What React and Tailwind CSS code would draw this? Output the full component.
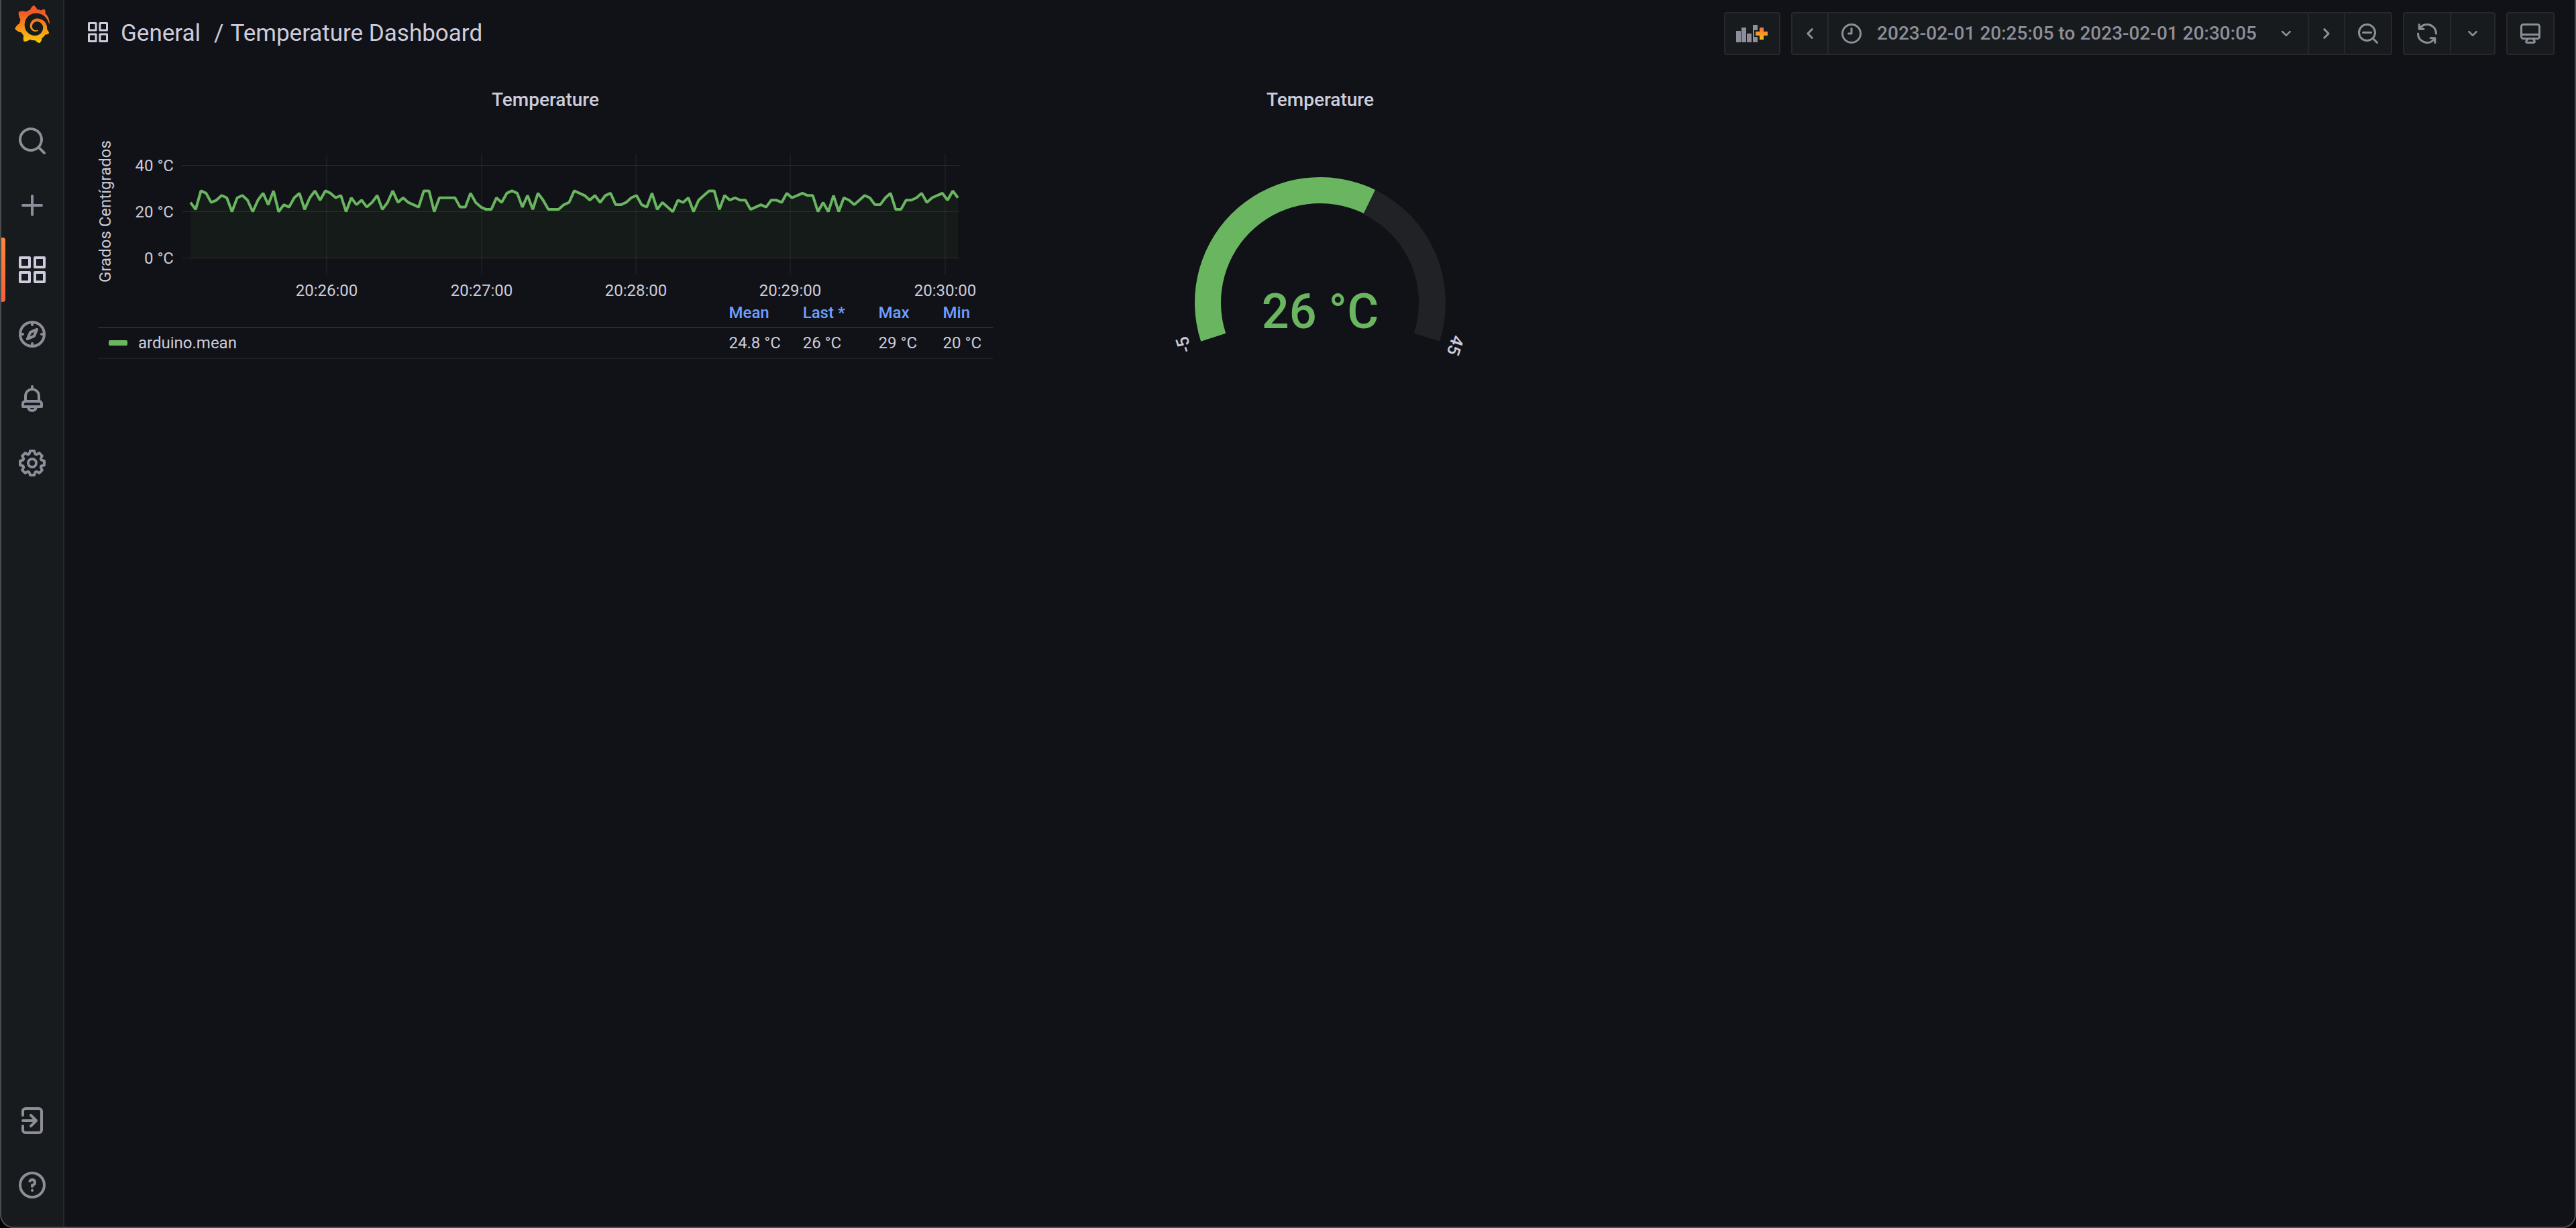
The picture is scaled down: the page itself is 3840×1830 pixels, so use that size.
import { SiGrafana } from "react-icons/si";

const PATHS = {
  search:
    "M21.71,20.29,18,16.61A9,9,0,1,0,16.61,18l3.68,3.68a1,1,0,0,0,1.42,0A1,1,0,0,0,21.71,20.29ZM11,18a7,7,0,1,1,7-7A7,7,0,0,1,11,18Z",
  plus: "M19,11H13V5a1,1,0,0,0-2,0v6H5a1,1,0,0,0,0,2h6v6a1,1,0,0,0,2,0V13h6a1,1,0,0,0,0-2Z",
  apps:
    "M10,13H3a1,1,0,0,0-1,1v7a1,1,0,0,0,1,1h7a1,1,0,0,0,1-1V14A1,1,0,0,0,10,13ZM9,20H4V15H9ZM21,2H14a1,1,0,0,0-1,1v7a1,1,0,0,0,1,1h7a1,1,0,0,0,1-1V3A1,1,0,0,0,21,2ZM20,9H15V4h5Zm1,4H14a1,1,0,0,0-1,1v7a1,1,0,0,0,1,1h7a1,1,0,0,0,1-1V14A1,1,0,0,0,21,13Zm-1,7H15V15h5ZM10,2H3A1,1,0,0,0,2,3v7a1,1,0,0,0,1,1h7a1,1,0,0,0,1-1V3A1,1,0,0,0,10,2ZM9,9H4V4H9Z",
  compass:
    "M12,2A10,10,0,1,0,22,12,10,10,0,0,0,12,2Zm1,17.93V19a1,1,0,0,0-2,0v.93A8,8,0,0,1,4.07,13H5a1,1,0,0,0,0-2H4.07A8,8,0,0,1,11,4.07V5a1,1,0,0,0,2,0V4.07A8,8,0,0,1,19.93,11H19a1,1,0,0,0,0,2h.93A8,8,0,0,1,13,19.93ZM15.14,7.55l-5,2.12a1,1,0,0,0-.52.52l-2.12,5a1,1,0,0,0,.21,1.1,1,1,0,0,0,.7.3.93.93,0,0,0,.4-.09l5-2.12a1,1,0,0,0,.52-.52l2.12-5a1,1,0,0,0-1.31-1.31Zm-2.49,5.1-2.28,1,1-2.28,2.28-1Z",
  bell:
    "M18,13.18V10a6,6,0,0,0-5-5.91V3a1,1,0,0,0-2,0V4.09A6,6,0,0,0,6,10v3.18A3,3,0,0,0,4,16v2a1,1,0,0,0,1,1H8.14a4,4,0,0,0,7.72,0H19a1,1,0,0,0,1-1V16A3,3,0,0,0,18,13.18ZM8,10a4,4,0,0,1,8,0v3H8Zm4,10a2,2,0,0,1-1.72-1h3.44A2,2,0,0,1,12,20Zm6-3H6V16a1,1,0,0,1,1-1H17a1,1,0,0,1,1,1Z",
  cog:
    "M21.32,9.55l-1.89-.63.89-1.78A1,1,0,0,0,20.13,6L18,3.87a1,1,0,0,0-1.15-.19l-1.78.89-.63-1.89A1,1,0,0,0,13.5,2h-3a1,1,0,0,0-.95.68L8.92,4.57,7.14,3.68A1,1,0,0,0,6,3.87L3.87,6a1,1,0,0,0-.19,1.15l.89,1.78-1.89.63A1,1,0,0,0,2,10.5v3a1,1,0,0,0,.68.95l1.89.63-.89,1.78A1,1,0,0,0,3.87,18L6,20.13a1,1,0,0,0,1.15.19l1.78-.89.63,1.89a1,1,0,0,0,.95.68h3a1,1,0,0,0,.95-.68l.63-1.89,1.78.89A1,1,0,0,0,18,20.13L20.13,18a1,1,0,0,0,.19-1.15l-.89-1.78,1.89-.63A1,1,0,0,0,22,13.5v-3A1,1,0,0,0,21.32,9.55ZM20,12.78l-1.2.4A2,2,0,0,0,17.64,16l.57,1.14-1.1,1.1L16,17.64a2,2,0,0,0-2.79,1.16l-.4,1.2H11.22l-.4-1.2A2,2,0,0,0,8,17.64l-1.14.57-1.1-1.1L6.36,16A2,2,0,0,0,5.2,13.18L4,12.78V11.22l1.2-.4A2,2,0,0,0,6.36,8L5.79,6.89l1.1-1.1L8,6.36A2,2,0,0,0,10.82,5.2l.4-1.2h1.56l.4,1.2A2,2,0,0,0,16,6.36l1.14-.57,1.1,1.1L17.64,8a2,2,0,0,0,1.16,2.79l1.2.4ZM12,8a4,4,0,1,0,4,4A4,4,0,0,0,12,8Zm0,6a2,2,0,1,1,2-2A2,2,0,0,1,12,14Z",
  signin:
    "M4,12a1,1,0,0,0,1,1h7.59l-2.3,2.29a1,1,0,0,0,0,1.42,1,1,0,0,0,1.42,0l4-4a1,1,0,0,0,.21-.33,1,1,0,0,0,0-.76,1,1,0,0,0-.21-.33l-4-4a1,1,0,1,0-1.42,1.42L12.59,11H5A1,1,0,0,0,4,12ZM17,2H7A3,3,0,0,0,4,5V8A1,1,0,0,0,6,8V5A1,1,0,0,1,7,4H17a1,1,0,0,1,1,1V19a1,1,0,0,1-1,1H7a1,1,0,0,1-1-1V16a1,1,0,0,0-2,0v3a3,3,0,0,0,3,3H17a3,3,0,0,0,3-3V5A3,3,0,0,0,17,2Z",
  help:
    "M11.29,15.29a1.58,1.58,0,0,0-.12.15.76.76,0,0,0-.09.18.64.64,0,0,0-.06.18,1.36,1.36,0,0,0,0,.2.84.84,0,0,0,.08.38.9.9,0,0,0,.54.54.94.94,0,0,0,.76,0,.9.9,0,0,0,.54-.54A1,1,0,0,0,13,16a1,1,0,0,0-.29-.71A1,1,0,0,0,11.29,15.29ZM12,2A10,10,0,1,0,22,12,10,10,0,0,0,12,2Zm0,18a8,8,0,1,1,8-8A8,8,0,0,1,12,20ZM12,7A3,3,0,0,0,9.4,8.5a1,1,0,1,0,1.73,1A1,1,0,0,1,12,9a1,1,0,0,1,0,2,1,1,0,0,0-1,1v1a1,1,0,0,0,2,0v-.18A3,3,0,0,0,12,7Z",
  clock:
    "M12,6a1,1,0,0,0-1,1v4H9a1,1,0,0,0,0,2h3a1,1,0,0,0,1-1V7A1,1,0,0,0,12,6Zm0-4A10,10,0,1,0,22,12,10,10,0,0,0,12,2Zm0,18a8,8,0,1,1,8-8A8,8,0,0,1,12,20Z",
  down:
    "M17,9.17a1,1,0,0,0-1.41,0L12,12.71,8.46,9.17a1,1,0,0,0-1.41,0,1,1,0,0,0,0,1.42l4.24,4.24a1,1,0,0,0,1.42,0L17,10.59A1,1,0,0,0,17,9.17Z",
  left:
    "M11.29,12l3.54-3.54a1,1,0,0,0,0-1.41,1,1,0,0,0-1.42,0L9.17,11.29a1,1,0,0,0,0,1.42L13.41,17a1,1,0,0,0,.71.29,1,1,0,0,0,.71-.29,1,1,0,0,0,0-1.41Z",
  right:
    "M14.83,11.29,10.59,7.05a1,1,0,0,0-1.42,0,1,1,0,0,0,0,1.41L12.71,12,9.17,15.54a1,1,0,0,0,0,1.41,1,1,0,0,0,.71.29,1,1,0,0,0,.71-.29l4.24-4.24A1,1,0,0,0,14.83,11.29Z",
  zoomOut:
    "M21.71,20.29,18,16.61A9,9,0,1,0,16.61,18l3.68,3.68a1,1,0,0,0,1.42,0A1,1,0,0,0,21.71,20.29ZM11,18a7,7,0,1,1,7-7A7,7,0,0,1,11,18Zm4-8H7a1,1,0,0,0,0,2h8a1,1,0,0,0,0-2Z",
  sync:
    "M19.91,15.51H15.38a1,1,0,0,0,0,2h2.4A8,8,0,0,1,4,12a1,1,0,1,0-2,0,10,10,0,0,0,16.88,7.23V21a1,1,0,0,0,2,0V16.5A1,1,0,0,0,19.91,15.51ZM12,2A10,10,0,0,0,5.12,4.77V3a1,1,0,0,0-2,0V7.5a1,1,0,0,0,1,1h4.5a1,1,0,0,0,0-2H6.22A8,8,0,0,1,20,12a1,1,0,0,0,2,0A10,10,0,0,0,12,2Z",
  monitor:
    "M19,2H5A3,3,0,0,0,2,5V15a3,3,0,0,0,3,3H7.64l-.58,1a2,2,0,0,0,0,2,2,2,0,0,0,1.75,1h6.46A2,2,0,0,0,17,21a2,2,0,0,0,0-2l-.59-1H19a3,3,0,0,0,3-3V5A3,3,0,0,0,19,2ZM8.77,20,10,18H14l1.2,2ZM20,15a1,1,0,0,1-1,1H5a1,1,0,0,1-1-1V14H20Zm0-3H4V5A1,1,0,0,1,5,4H19a1,1,0,0,1,1,1Z",
};

function Icon({ name, className = "size-9" }) {
  return (
    <svg viewBox="0 0 24 24" fill="currentColor" aria-hidden="true" className={`shrink-0 ${className}`}>
      <path d={PATHS[name]} />
    </svg>
  );
}

const PLUS = "M35 9h6v6h6v6h-6v6h-6v-6h-6v-6h6z";

function PanelAddIcon() {
  return (
    <svg viewBox="0 0 48 36" aria-hidden="true" className="h-9 w-12 shrink-0">
      <defs>
        <linearGradient id="plusGradient" x1="0" y1="0" x2="0" y2="1">
          <stop offset="0" stopColor="#f0703a" />
          <stop offset="1" stopColor="#f8bd14" />
        </linearGradient>
      </defs>
      <path d="M0 14h7v17H0zM8 9h7v22H8zM16 18h7v13h-7zM25 5h7v26h-7z" fill="currentColor" />
      <path d={PLUS} fill="#171b1d" stroke="#171b1d" strokeWidth="4" />
      <path d={PLUS} fill="url(#plusGradient)" />
    </svg>
  );
}

function NavLink({ icon, label, active }) {
  return (
    <a
      href="#"
      aria-label={label}
      aria-current={active ? "page" : undefined}
      className={`relative flex h-24 items-center justify-center pl-0.5 ${active ? "text-[#ccccdc]" : "text-[#8d8e9a]"}`}
    >
      {active && (
        <span className="absolute inset-y-0 left-0 w-2 rounded-sm bg-linear-to-b from-[#ff8833] to-[#f55f3e]" />
      )}
      <Icon name={icon} className="size-12" />
    </a>
  );
}

function Sidebar() {
  return (
    <nav className="flex w-24 shrink-0 flex-col border-r-2 border-[#25282c] bg-[#171b1d]">
      <svg className="absolute size-0" aria-hidden="true">
        <defs>
          <linearGradient id="logoGradient" x1="0" y1="0" x2="0" y2="1">
            <stop offset="0.2" stopColor="#f05a28" />
            <stop offset="1" stopColor="#fbca0a" />
          </linearGradient>
        </defs>
      </svg>
      <a href="#" aria-label="Home" className="mb-[98px] flex justify-center pt-2 pl-0.5">
        <SiGrafana fill="url(#logoGradient)" className="size-14" />
      </a>
      <NavLink icon="search" label="Search dashboards" />
      <NavLink icon="plus" label="Create" />
      <NavLink icon="apps" label="Dashboards" active />
      <NavLink icon="compass" label="Explore" />
      <NavLink icon="bell" label="Alerting" />
      <NavLink icon="cog" label="Configuration" />
      <div className="grow" />
      <NavLink icon="signin" label="Sign in" />
      <NavLink icon="help" label="Help" />
      <div className="h-4" />
    </nav>
  );
}

function ToolButton({ label, className = "px-4", children }) {
  return (
    <button
      type="button"
      aria-label={label}
      className={`-ml-0.5 flex h-16 items-center border-2 border-[#25282c] bg-[#171b1d] text-[#8d8e9a] first:ml-0 first:rounded-l-sm last:rounded-r-sm ${className}`}
    >
      {children}
    </button>
  );
}

function TopBar() {
  return (
    <header className="flex h-25 items-center justify-between px-8">
      <h1 className="flex items-center text-[35px] text-[#ccccdc]">
        <Icon name="apps" className="mb-1 size-9" />
        <a href="#" className="ml-4">General</a>
        <span className="mr-2.5 ml-5">/</span>
        <a href="#">Temperature Dashboard</a>
      </h1>
      <div className="flex gap-4 text-[28px] font-medium">
        <div className="flex">
          <ToolButton label="Add panel">
            <PanelAddIcon />
          </ToolButton>
        </div>
        <div className="flex">
          <ToolButton label="Move time range backwards" className="px-2">
            <Icon name="left" />
          </ToolButton>
          <ToolButton>
            <Icon name="clock" />
            <span className="mr-7 ml-5">2023-02-01 20:25:05 to 2023-02-01 20:30:05</span>
            <Icon name="down" className="size-8" />
          </ToolButton>
          <ToolButton label="Move time range forwards" className="px-2">
            <Icon name="right" />
          </ToolButton>
          <ToolButton label="Zoom out time range">
            <Icon name="zoomOut" />
          </ToolButton>
        </div>
        <div className="flex">
          <ToolButton label="Refresh dashboard">
            <Icon name="sync" />
          </ToolButton>
          <ToolButton label="Choose refresh interval">
            <Icon name="down" className="size-8" />
          </ToolButton>
        </div>
        <div className="flex">
          <ToolButton label="Cycle view mode">
            <Icon name="monitor" />
          </ToolButton>
        </div>
      </div>
    </header>
  );
}

const READINGS = [
  24, 21, 29, 28, 24, 25, 27, 26, 20, 26, 27, 25, 20, 25, 28, 23, 29, 20, 23, 22, 26, 28, 21, 26, 29, 25, 29, 28, 26,
  27, 20, 26, 23, 25, 22, 24, 27, 21, 24, 29, 24, 26, 24, 23, 22, 29, 29, 20, 26, 26, 26, 26, 22, 22, 28, 24, 22, 21,
  21, 26, 24, 28, 29, 28, 22, 27, 21, 28, 25, 21, 21, 21, 23, 24, 29, 28, 27, 25, 27, 24, 27, 28, 23, 23, 24, 26, 27,
  23, 22, 28, 21, 24, 22, 20, 25, 24, 26, 20, 25, 27, 29, 29, 21, 27, 25, 26, 25, 25, 21, 22, 23, 22, 25, 25, 24, 28,
  26, 27, 28, 27, 27, 20, 24, 20, 27, 20, 26, 25, 23, 25, 27, 26, 23, 23, 26, 28, 21, 21, 25, 25, 26, 28, 24, 26, 27,
  28, 25, 29, 26,
];

const xOf = (i) => 140 + (i * 1144) / (READINGS.length - 1);
const yOf = (v) => 205.5 - v * 3.45;
const LINE = READINGS.map((v, i) => `${xOf(i).toFixed(1)},${yOf(v).toFixed(1)}`).join(" ");
const TIMES = [
  [343, "20:26:00"],
  [574, "20:27:00"],
  [804, "20:28:00"],
  [1034, "20:29:00"],
  [1265, "20:30:00"],
];

function TimeSeries() {
  return (
    <svg
      viewBox="0 3 1338 266"
      className="block w-full overflow-visible font-['Roboto',sans-serif] text-2xl"
      fill="#ccccdc"
    >
      <text transform="translate(21 136) rotate(-90)" textAnchor="middle">
        Grados Centígrados
      </text>
      <polygon points={`140,205.5 ${LINE} 1284,205.5`} fill="#4dbf3f" fillOpacity="0.06" />
      <g stroke="#f0faff" strokeOpacity="0.09" strokeWidth="1">
        {[40, 20, 0].map((v) => (
          <line key={v} x1="127" x2="1286" y1={yOf(v)} y2={yOf(v)} />
        ))}
        {TIMES.map(([x]) => (
          <line key={x} x1={x} x2={x} y1="50" y2="230" />
        ))}
      </g>
      {[40, 20, 0].map((v) => (
        <text key={v} x="115" y={yOf(v) + 8} textAnchor="end">
          {v} °C
        </text>
      ))}
      {TIMES.map(([x, t]) => (
        <text key={t} x={x} y="262" textAnchor="middle">
          {t}
        </text>
      ))}
      <polyline points={LINE} fill="none" stroke="#6ab560" strokeWidth="4" strokeLinejoin="bevel" />
    </svg>
  );
}

const STATS = [
  ["Mean", "24.8 °C"],
  ["Last *", "26 °C"],
  ["Max", "29 °C"],
  ["Min", "20 °C"],
];

function Legend() {
  return (
    <div className="px-0.5">
      <table className="w-full border-collapse text-left text-2xl whitespace-nowrap text-[#ccccdc]">
        <thead>
          <tr className="h-10 border-b-2 border-[#2a2b30] align-top text-[#6e9fff]">
            <td className="w-full" />
            {STATS.map(([name]) => (
              <th key={name} scope="col" className="pr-[34px] pl-4 leading-9 font-medium">
                {name}
              </th>
            ))}
          </tr>
        </thead>
        <tbody>
          <tr className="h-[46px] border-b-2 border-[#1d1f24]">
            <th scope="row" className="px-4 font-normal">
              <span className="flex items-center gap-4">
                <span className="h-2 w-7 rounded-xs bg-[#6ab560]" />
                arduino.mean
              </span>
            </th>
            {STATS.map(([name, value]) => (
              <td key={name} className="px-4">
                {value}
              </td>
            ))}
          </tr>
        </tbody>
      </table>
    </div>
  );
}

const polar = (r, deg) => {
  const a = (deg * Math.PI) / 180;
  return `${(438 + r * Math.cos(a)).toFixed(2)} ${(271 - r * Math.sin(a)).toFixed(2)}`;
};

const ring = (inner, outer, from, to) => {
  const large = from - to > 180 ? 1 : 0;
  return `M${polar(outer, from)}A${outer} ${outer} 0 ${large} 1 ${polar(outer, to)}L${polar(inner, to)}A${inner} ${inner} 0 ${large} 0 ${polar(inner, from)}Z`;
};

function Gauge() {
  return (
    <svg
      viewBox="0 2 876 358"
      className="block w-full font-['Roboto',sans-serif] font-medium"
      textAnchor="middle"
      role="img"
      aria-label="26 °C"
    >
      <path d={ring(147, 187, 64, -18)} fill="#202226" />
      <path d={ring(148, 187, 198, 64)} fill="#6ab560" />
      <text x="438" y="309" className="text-7xl" fill="#6ab560">
        26 °C
      </text>
      <g className="text-[26px]" fill="#ccccdc">
        <text transform="translate(243 331) rotate(-108)">-5</text>
        <text transform="translate(631 332) rotate(108)">45</text>
      </g>
    </svg>
  );
}

function Panel({ title, className, children }) {
  return (
    <section className={`px-4 ${className}`}>
      <h2 className="flex h-[66px] items-center justify-center text-[28px] font-medium text-[#ccccdc]">{title}</h2>
      {children}
    </section>
  );
}

export default function App() {
  return (
    <div className="relative flex min-h-screen bg-[#111217] font-['Roboto',sans-serif]">
      <Sidebar />
      <div className="min-w-0 grow">
        <TopBar />
        <main className="grid grid-cols-[repeat(24,minmax(0,1fr))] items-start gap-4 px-8 pt-4">
          <Panel title="Temperature" className="col-span-9">
            <TimeSeries />
            <Legend />
          </Panel>
          <Panel title="Temperature" className="col-span-6">
            <Gauge />
          </Panel>
        </main>
      </div>
      <div className="pointer-events-none absolute inset-0 overflow-hidden">
        <div className="size-full rounded-b-[20px] border-x-2 border-b-2 border-[#4a4d50] shadow-[0_0_0_20px_#000]" />
      </div>
    </div>
  );
}
